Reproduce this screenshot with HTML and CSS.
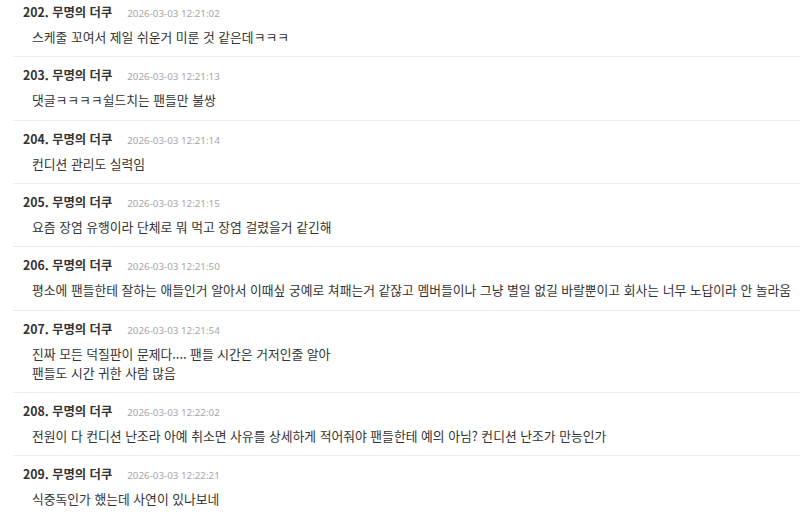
FILE: index.html
```html
<!DOCTYPE html>
<html lang="ko">
<head>
<meta charset="utf-8">
<link rel="stylesheet" href="styles.css">
</head>
<body>
<ul class="comments">
  <li class="comment">
    <div class="meta"><span class="author">202. 무명의 더쿠</span><span class="date">2026-03-03 12:21:02</span></div>
    <div class="text">스케줄 꼬여서 제일 쉬운거 미룬 것 같은데ㅋㅋㅋ</div>
  </li>
  <li class="comment">
    <div class="meta"><span class="author">203. 무명의 더쿠</span><span class="date">2026-03-03 12:21:13</span></div>
    <div class="text">댓글ㅋㅋㅋㅋ쉴드치는 팬들만 불쌍</div>
  </li>
  <li class="comment">
    <div class="meta"><span class="author">204. 무명의 더쿠</span><span class="date">2026-03-03 12:21:14</span></div>
    <div class="text">컨디션 관리도 실력임</div>
  </li>
  <li class="comment">
    <div class="meta"><span class="author">205. 무명의 더쿠</span><span class="date">2026-03-03 12:21:15</span></div>
    <div class="text">요즘 장염 유행이라 단체로 뭐 먹고 장염 걸렸을거 같긴해</div>
  </li>
  <li class="comment">
    <div class="meta"><span class="author">206. 무명의 더쿠</span><span class="date">2026-03-03 12:21:50</span></div>
    <div class="text">평소에 팬들한테 잘하는 애들인거 알아서 이때싶 궁예로 쳐패는거 같잖고 멤버들이나 그냥 별일 없길 바랄뿐이고 회사는 너무 노답이라 안 놀라움</div>
  </li>
  <li class="comment">
    <div class="meta"><span class="author">207. 무명의 더쿠</span><span class="date">2026-03-03 12:21:54</span></div>
    <div class="text">진짜 모든 덕질판이 문제다.... 팬들 시간은 거저인줄 알아<br>팬들도 시간 귀한 사람 많음</div>
  </li>
  <li class="comment">
    <div class="meta"><span class="author">208. 무명의 더쿠</span><span class="date">2026-03-03 12:22:02</span></div>
    <div class="text">전원이 다 컨디션 난조라 아예 취소면 사유를 상세하게 적어줘야 팬들한테 예의 아님? 컨디션 난조가 만능인가</div>
  </li>
  <li class="comment">
    <div class="meta"><span class="author">209. 무명의 더쿠</span><span class="date">2026-03-03 12:22:21</span></div>
    <div class="text">식중독인가 했는데 사연이 있나보네</div>
  </li>
</ul>
</body>
</html>
```
FILE: styles.css
```css
html, body {
  margin: 0;
  padding: 0;
  background: #fff;
  overflow: hidden;
}
body {
  font-family: "Noto Sans CJK KR", "Noto Sans", sans-serif;
  color: #333;
}
.comments {
  list-style: none;
  margin: -6px 0 0 13px;
  padding: 0;
}
.comment {
  padding: 10px 0 10.33px 10px;
  border-bottom: 1px solid #ececec;
}
.meta {
  display: flex;
  align-items: baseline;
  height: 16px;
  line-height: 16px;
}
.author {
  font-size: 12.3px;
  font-weight: bold;
  color: #333;
}
.date {
  margin-left: 15px;
  font-family: "Noto Sans", "Noto Sans CJK KR", sans-serif;
  font-size: 9.8px;
  color: #a6a6a6;
}
.text {
  margin-top: 7px;
  padding-left: 9px;
  font-size: 12.8px;
  line-height: 19px;
  color: #333;
  white-space: nowrap;
}
```
